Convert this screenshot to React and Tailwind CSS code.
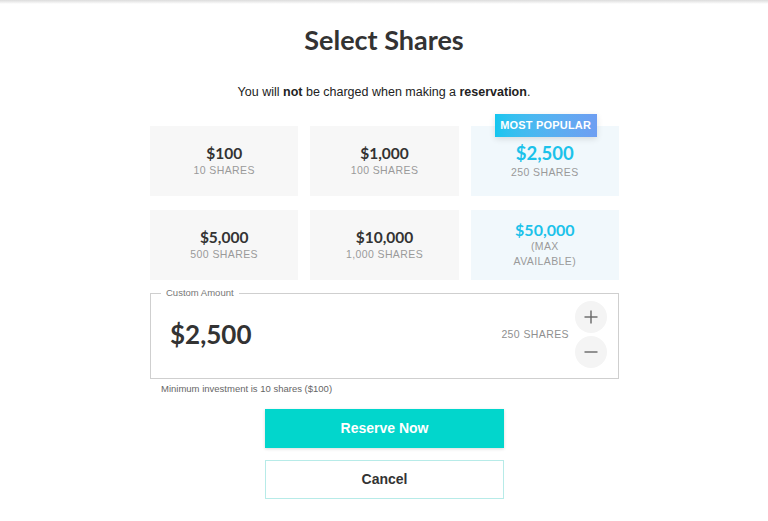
import React from "react";

const options = [
  { price: "$100", sub: ["10 SHARES"] },
  { price: "$1,000", sub: ["100 SHARES"] },
  { price: "$2,500", sub: ["250 SHARES"], highlight: true, badge: true },
  { price: "$5,000", sub: ["500 SHARES"] },
  { price: "$10,000", sub: ["1,000 SHARES"] },
  { price: "$50,000", sub: ["(MAX", "AVAILABLE)"], highlight: true, compact: true },
];

function OptionCard({ price, sub, highlight, badge, compact }) {
  const priceClass = compact
    ? "text-[16px] leading-[18px] text-[#1cc2ea]"
    : highlight
    ? "text-[18.5px] leading-tight text-[#1cc2ea]"
    : "text-[15.5px] leading-tight text-[#333]";
  return (
    <div
      className={`relative flex h-[70px] flex-col items-center justify-center ${
        highlight ? "bg-[#f1f8fc]" : "bg-[#f7f7f7]"
      }`}
    >
      {badge && (
        <div className="absolute left-[24px] top-[-12px] flex h-[23px] w-[102px] items-center justify-center bg-gradient-to-r from-[#12c6ef] to-[#6e9ef2] font-['Liberation_Sans',Arial,sans-serif] text-[11px] font-bold tracking-[0.2px] text-white shadow-[0_2px_6px_rgba(0,0,0,0.12)]">
          MOST POPULAR
        </div>
      )}
      <div className={`font-[Lato,sans-serif] font-bold ${priceClass}`}>{price}</div>
      {sub.map((s) => (
        <div
          key={s}
          className="font-['Liberation_Sans',Arial,sans-serif] text-[10.5px] leading-[15px] tracking-[0.4px] text-[#9a9a9a]"
        >
          {s}
        </div>
      ))}
    </div>
  );
}

function RoundButton({ children }) {
  return (
    <button className="flex h-[32px] w-[32px] items-center justify-center rounded-full bg-[#f4f4f4]">
      {children}
    </button>
  );
}

export default function App() {
  return (
    <div className="relative h-[521px] w-full overflow-hidden bg-white font-['Liberation_Sans',Arial,sans-serif]">
      <div className="h-[4px] bg-gradient-to-b from-[#dcdcdc] to-white" />

      <h1 className="mt-[20px] text-center font-[Lato,sans-serif] text-[27px] font-bold leading-[32px] text-[#333]">
        Select Shares
      </h1>

      <p className="mt-[27px] text-center text-[12.5px] leading-[18px] text-[#222]">
        You will <b>not</b> be charged when making a <b>reservation</b>.
      </p>

      <div className="mx-auto mt-[25px] w-[470px] pl-[1px]">
        <div className="grid grid-cols-3 gap-x-[12px] gap-y-[14px]">
          {options.map((o) => (
            <OptionCard key={o.price} {...o} />
          ))}
        </div>

        <fieldset className="mt-[7px] h-[92px] border border-[#cfcfcf] pl-[19px] pr-[11px]">
          <legend className="ml-[-9px] px-[5px] text-[9.5px] leading-[12px] text-[#777]">
            Custom Amount
          </legend>
          <div className="flex h-[70px] items-center">
            <div className="flex-1 font-[Lato,sans-serif] text-[26px] font-bold text-[#333]">
              $2,500
            </div>
            <div className="mr-[6px] mt-[2px] text-[10.5px] tracking-[0.4px] text-[#8f8f8f]">
              250 SHARES
            </div>
            <div className="flex flex-col gap-[3px]">
              <RoundButton>
                <svg width="14" height="14" viewBox="0 0 14 14" stroke="#666" strokeWidth="1.4">
                  <line x1="7" y1="0.5" x2="7" y2="13.5" />
                  <line x1="0.5" y1="7" x2="13.5" y2="7" />
                </svg>
              </RoundButton>
              <RoundButton>
                <svg width="14" height="14" viewBox="0 0 14 14" stroke="#666" strokeWidth="1.4">
                  <line x1="0.5" y1="7" x2="13.5" y2="7" />
                </svg>
              </RoundButton>
            </div>
          </div>
        </fieldset>

        <p className="mt-[4px] pl-[11px] text-[9.5px] leading-[12px] text-[#666]">
          Minimum investment is 10 shares ($100)
        </p>
      </div>

      <div className="mx-auto mt-[14px] flex w-[240px] flex-col gap-[12px] pl-[1px]">
        <button className="h-[39px] bg-[#02d6cc] text-[14px] font-bold text-white shadow-[0_1px_3px_rgba(0,0,0,0.15)]">
          Reserve Now
        </button>
        <button className="h-[39px] border border-[#b7ebe8] bg-white text-[14px] font-bold text-[#333]">
          Cancel
        </button>
      </div>
    </div>
  );
}
